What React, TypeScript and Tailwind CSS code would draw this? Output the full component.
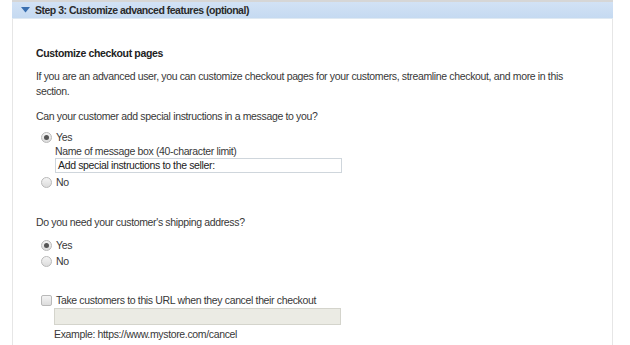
import React from "react";

function Radio({ checked }: { checked?: boolean }) {
  return (
    <span className="inline-flex h-[11px] w-[11px] shrink-0 items-center justify-center rounded-full border border-[#b9b9b9] bg-gradient-to-b from-[#f4f4f4] to-[#dcdcdc]">
      {checked && <span className="h-[5px] w-[5px] rounded-full bg-[#555]" />}
    </span>
  );
}

function RadioRow({ label, checked }: { label: string; checked?: boolean }) {
  return (
    <div className="flex h-[15px] items-center gap-[4px]">
      <Radio checked={checked} />
      <span>{label}</span>
    </div>
  );
}

export default function App() {
  return (
    <div
      className="h-[345px] w-[630px] overflow-hidden bg-white text-[10.5px] leading-[15px] tracking-[-0.35px] text-[#383838]"
      style={{ fontFamily: '"Liberation Sans", Arial, sans-serif' }}
    >
      <div className="ml-[12px] w-[601px] border-t-2 border-[#d6d6d6]">
        {/* header */}
        <div className="flex h-[17px] items-center gap-[5px] border-b border-[#dfe9f2] bg-gradient-to-b from-[#d2e2f5] to-[#c5daf1] pl-[9px]">
          <svg width="9" height="6" viewBox="0 0 9 6">
            <path d="M0 0 L9 0 L4.5 5.5 Z" fill="#3a6fb0" />
          </svg>
          <span className="font-bold tracking-[-0.5px] text-[#2b2b2b]">Step 3: Customize advanced features (optional)</span>
        </div>

        {/* body */}
        <div className="h-[330px] border-x border-[#e6e6e6] pl-[23px] pt-[27px]">
          <div className="font-bold text-[#222]">Customize checkout pages</div>

          <p className="mt-[8px] w-[530px]">
            If you are an advanced user, you can customize checkout pages for your customers, streamline checkout, and more in this section.
          </p>

          <p className="mt-[10px]">Can your customer add special instructions in a message to you?</p>

          <div className="mt-[6px] pl-[5px]">
            <RadioRow label="Yes" checked />
            <div className="pl-[14px]">
              <div className="leading-[13px]">Name of message box (40-character limit)</div>
              <div className="flex h-[15px] w-[287px] items-center border border-[#cfd6dc] bg-white pl-[2px] text-[#222]">
                Add special instructions to the seller:
              </div>
            </div>
            <div className="mt-[2px]">
              <RadioRow label="No" />
            </div>
          </div>

          <p className="mt-[25px]">Do you need your customer's shipping address?</p>

          <div className="mt-[8px] pl-[5px]">
            <RadioRow label="Yes" checked />
            <div className="mt-[1px]">
              <RadioRow label="No" />
            </div>
          </div>

          <div className="mt-[24px] pl-[5px]">
            <div className="flex h-[15px] items-center gap-[4px]">
              <span className="h-[11px] w-[11px] shrink-0 rounded-[2px] border border-[#b9b9b9] bg-gradient-to-b from-[#f4f4f4] to-[#dcdcdc]" />
              <span>Take customers to this URL when they cancel their checkout</span>
            </div>
            <div className="pl-[13px]">
              <div className="h-[17px] w-[287px] border border-[#d4d4cc] bg-[#ebebe4]" />
              <div className="mt-[2px]">Example: https://www.mystore.com/cancel</div>
            </div>
          </div>
        </div>
      </div>
    </div>
  );
}
